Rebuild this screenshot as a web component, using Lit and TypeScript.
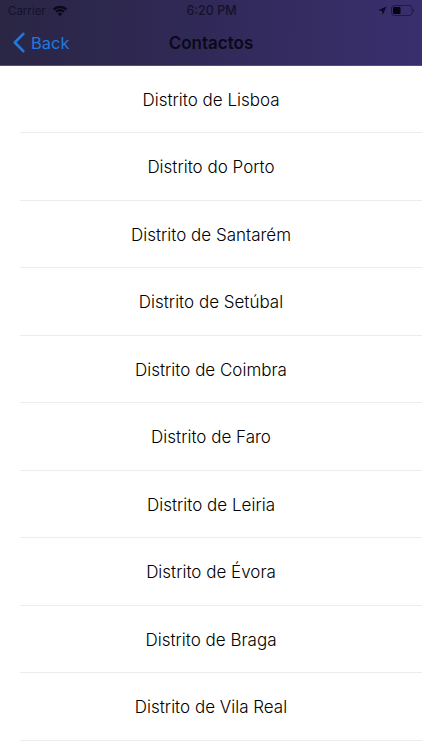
import { LitElement, html, css } from "lit";
import { customElement } from "lit/decorators.js";

const DISTRICTS = [
  "Distrito de Lisboa",
  "Distrito do Porto",
  "Distrito de Santarém",
  "Distrito de Setúbal",
  "Distrito de Coimbra",
  "Distrito de Faro",
  "Distrito de Leiria",
  "Distrito de Évora",
  "Distrito de Braga",
  "Distrito de Vila Real",
];

@customElement("app-root")
export class AppRoot extends LitElement {
  static styles = css`
    :host {
      display: block;
      width: 422px;
      height: 750px;
      overflow: hidden;
      background: #fff;
      font-family: Inter, "Liberation Sans", sans-serif;
      color: #000;
    }
    .header {
      height: 65.5px;
      box-sizing: border-box;
      background: linear-gradient(92deg, #2a2644 0%, #2e2852 35%, #3a2f6e 100%);
      border-bottom: 1px solid #55516a;
      display: flex;
      flex-direction: column;
    }
    .status {
      height: 21px;
      display: grid;
      grid-template-columns: 1fr auto 1fr;
      align-items: center;
      padding: 0 7px 0 8px;
      font-size: 11.5px;
      color: #14112a;
    }
    .status-left {
      display: flex;
      align-items: center;
      gap: 6px;
    }
    .time {
      font-weight: 500;
      font-size: 12.5px;
    }
    .status-right {
      display: flex;
      justify-content: flex-end;
      align-items: center;
      gap: 4px;
    }
    .nav {
      flex: 1;
      display: grid;
      grid-template-columns: 1fr auto 1fr;
      align-items: center;
    }
    .back {
      display: flex;
      align-items: center;
      gap: 6px;
      margin-left: 13px;
      color: #1f7ae0;
      font-size: 16.5px;
    }
    .title {
      font-size: 17px;
      font-weight: 600;
      color: #0b0918;
    }
    .row {
      height: 67.5px;
      display: flex;
      align-items: center;
      justify-content: center;
      font-size: 17px;
      font-weight: 350;
      box-sizing: border-box;
      margin-left: 20px;
      padding: 2px 20px 0 0;
      border-bottom: 1px solid #ececee;
    }
  `;

  render() {
    return html`
      <div class="header">
        <div class="status">
          <div class="status-left">
            <span>Carrier</span>
            <svg width="16" height="12" viewBox="0 0 15 11" fill="#0b0918">
              <path d="M7.5 2.9c2 0 3.8.8 5.2 2l1.6-1.7A10 10 0 0 0 7.5.5 10 10 0 0 0 .7 3.2l1.6 1.7a7.6 7.6 0 0 1 5.2-2z"/>
              <path d="M7.5 5.9c1.1 0 2.2.4 3 1.1l1.6-1.6a6.8 6.8 0 0 0-9.2 0L4.5 7c.8-.7 1.9-1.1 3-1.1z"/>
              <path d="M7.5 10.5 9.8 8.1a3.4 3.4 0 0 0-4.6 0z"/>
            </svg>
          </div>
          <div class="time">6:20 PM</div>
          <div class="status-right">
            <svg width="10" height="10" viewBox="0 0 10 10" fill="#0e0b1e">
              <path d="M9.6.4 1 4.3l3.9.7.8 4z"/>
            </svg>
            <svg width="24" height="11" viewBox="0 0 24 11">
              <rect x=".5" y=".5" width="20.5" height="10" rx="2.6" fill="none" stroke="#0e0b1e" stroke-opacity=".55"/>
              <rect x="2" y="2" width="7.5" height="7" rx="1" fill="#06050f"/>
              <path d="M22 3.8c.8.2 1.2.9 1.2 1.7s-.4 1.5-1.2 1.7z" fill="#0e0b1e" fill-opacity=".5"/>
            </svg>
          </div>
        </div>
        <div class="nav">
          <div class="back">
            <svg width="12" height="21" viewBox="0 0 12 21" fill="none" stroke="#1f7ae0" stroke-width="2.6" stroke-linecap="round" stroke-linejoin="round">
              <path d="M10.3 1.8 1.8 10.5l8.5 8.7"/>
            </svg>
            <span>Back</span>
          </div>
          <div class="title">Contactos</div>
          <div></div>
        </div>
      </div>
      ${DISTRICTS.map((d) => html`<div class="row">${d}</div>`)}
    `;
  }
}
